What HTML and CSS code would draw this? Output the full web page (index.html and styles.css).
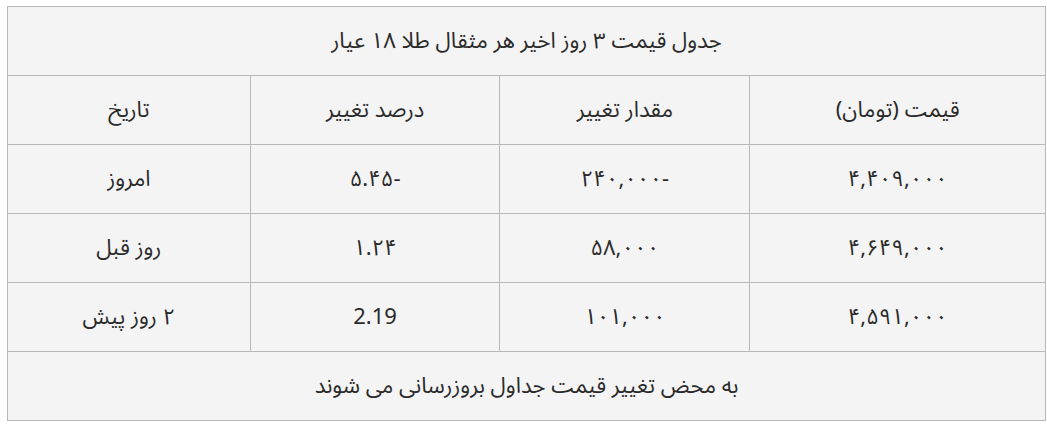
FILE: index.html
```html
<!DOCTYPE html>
<html lang="fa" dir="rtl">
<head>
<meta charset="utf-8">
<link rel="stylesheet" href="styles.css">
</head>
<body>
<table class="price-table">
  <tr><td class="full" colspan="4">جدول قیمت ۳ روز اخیر هر مثقال طلا ۱۸ عیار</td></tr>
  <tr><td class="c1">قیمت (تومان)</td><td class="c2">مقدار تغییر</td><td class="c3">درصد تغییر</td><td class="c4">تاریخ</td></tr>
  <tr><td>۴,۴۰۹,۰۰۰</td><td>-۲۴۰,۰۰۰</td><td>-۵.۴۵</td><td>امروز</td></tr>
  <tr><td>۴,۶۴۹,۰۰۰</td><td>۵۸,۰۰۰</td><td>۱.۲۴</td><td>روز قبل</td></tr>
  <tr><td>۴,۵۹۱,۰۰۰</td><td>۱۰۱,۰۰۰</td><td>2.19</td><td>۲ روز پیش</td></tr>
  <tr><td class="full" colspan="4">به محض تغییر قیمت جداول بروزرسانی می شوند</td></tr>
</table>
</body>
</html>
```
FILE: styles.css
```css
html, body { margin: 0; padding: 0; background: #fff; }
body { padding: 6px 1px 0 8px; }
.price-table {
  width: 1039px;
  border-collapse: collapse;
  background: #f4f4f4;
  font-family: "Noto Sans Arabic", "DejaVu Sans", sans-serif;
  font-size: 22px;
  color: #2a2a2a;
}
.price-table td {
  border: 1px solid #b8b8b8;
  height: 68px;
  padding: 0;
  text-align: center;
  vertical-align: middle;
}
.c1 { width: 295px; }
.c2 { width: 249px; }
.c3 { width: 249px; }
.c4 { width: 242px; }
```
